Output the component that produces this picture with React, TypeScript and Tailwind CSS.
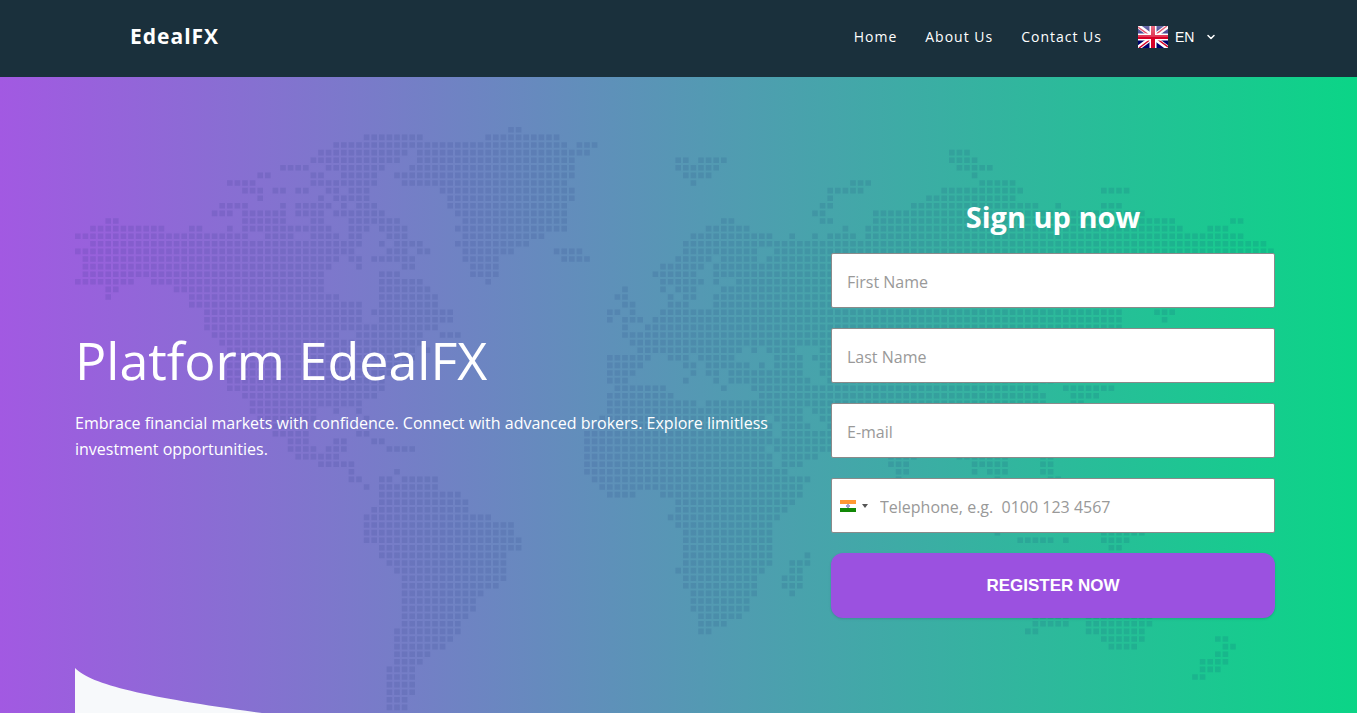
import { ChevronDown } from "lucide-react";

const CELL = 7.6;
const DOT = 5.6;

// One entry per map row, each "from-to" is a run of filled columns.
const MAP_ROWS = [
  "57-58",
  "38-45 54-63",
  "34-64 66-68",
  "32-43 45-67 115-117",
  "31-42 45-65 79-80 82-85 115-118",
  "27-30 33-40 44-65 79-84 116-120",
  "24-25 31-32 35-39 42-65 80-83 118-118",
  "20-23 31-39 43-64 81-81 102-104 119-123",
  "22-24 26-27 29-30 33-34 36-38 48-65 99-103 114-124 135-138",
  "24-24 32-32 34-38 49-65 99-99 112-123",
  "19-22 27-27 29-33 35-35 37-39 49-64 98-99 110-126 129-129 135-137",
  "18-20 22-27 29-32 34-40 50-64 97-98 105-140",
  "4-5 22-27 31-32 36-42 51-64 85-86 98-99 105-144 152-153",
  "2-11 15-16 20-20 22-33 36-38 40-43 50-64 83-88 101-101 104-145 149-151",
  "0-22 25-28 31-34 36-37 41-43 51-61 81-91 94-94 97-97 99-102 104-153",
  "2-37 40-40 42-45 50-59 80-156",
  "0-36 41-43 45-46 51-57 63-66 80-89 92-157",
  "1-34 36-37 39-44 51-55 64-67 79-83 85-89 91-150",
  "1-33 37-37 43-44 52-55 77-82 84-150",
  "1-32 40-42 52-55 76-81 84-148",
  "0-7 10-32 40-45 54-54 77-82 84-84 87-146",
  "4-5 13-32 40-46 72-72 77-77 79-81 85-145",
  "4-4 15-34 40-47 71-72 78-78 80-81 84-140",
  "15-37 40-47 72-73 78-80 84-138",
  "17-37 39-49 70-71 73-73 77-137 142-144",
  "17-37 40-49 70-70 72-74 76-137 143-143",
  "17-47 72-72 75-137",
  "18-34 37-45 48-50 72-136",
  "19-45 73-135",
  "20-44 46-46 74-87 89-89 91-94 98-134",
  "20-44 70-75 78-80 82-86 92-95 97-133",
  "20-43 70-74 80-81 83-88 90-90 92-95 98-132",
  "20-42 70-73 81-81 83-84 86-95 98-130",
  "20-40 70-72 80-80 84-84 86-96 99-128",
  "20-40 71-77 85-85 89-126 130-136",
  "22-39 70-78 90-127 131-134",
  "23-37 70-81 83-127 131-132",
  "23-31 34-34 37-37 70-95 97-127",
  "24-31 38-38 69-90 92-95 98-126",
  "25-30 68-91 93-96 99-125",
  "26-30 37-38 67-91 93-99 101-124",
  "28-30 34-35 39-40 67-91 92-99 104-122",
  "28-31 33-35 41-44 67-90 92-99 106-122",
  "29-34 67-91 93-97 107-110 116-122 127-128",
  "32-36 67-91 93-95 107-109 118-122 127-128",
  "36-36 42-42 67-93 108-109 118-118 120-122 127-128",
  "36-37 40-41 43-47 68-96 108-108 121-121 128-129",
  "38-38 40-47 69-95",
  "40-50 70-73 77-95",
  "40-51 79-94",
  "39-51 79-93",
  "38-54 78-92",
  "38-57 79-91",
  "38-57 80-91 121-121 135-140",
  "38-58 80-91 124-128 130-130 135-138",
  "40-58 80-91 136-137",
  "40-56 80-91 96-96",
  "41-56 80-91 94-96",
  "42-56 79-90 94-95",
  "43-56 80-89 93-95",
  "43-55 80-89 93-95",
  "43-53 81-89 94-94",
  "43-52 81-88",
  "43-52 81-88",
  "43-51 82-87 126-130 133-141",
  "43-50 82-85 126-130 133-141",
  "42-50 82-83 125-126 133-140",
  "42-49 135-140 150-151",
  "42-48 136-139 151-152",
  "42-46 150-151",
  "42-45 148-151",
  "41-44 148-150",
  "41-44 147-148",
  "41-44",
  "41-44",
  "41-43",
  "41-43",
];

const mapPath = MAP_ROWS.map((row, r) =>
  row
    .split(" ")
    .map((run) => {
      const [from, to] = run.split("-").map(Number);
      let d = "";
      for (let c = from; c <= to; c++) {
        d += `M${(c * CELL).toFixed(1)} ${(r * CELL).toFixed(1)}h${DOT}v${DOT}h-${DOT}z`;
      }
      return d;
    })
    .join("")
).join("");

function DottedMap() {
  return (
    <svg viewBox="0 0 1200 590" className="absolute inset-x-0 top-[50px] w-full" aria-hidden="true">
      <path d={mapPath} fill="#08206e" fillOpacity="0.1" />
    </svg>
  );
}

function FlagUK() {
  return (
    <svg viewBox="0 0 30 22" className="h-[22px] w-[30px]" aria-hidden="true">
      <defs>
        <linearGradient id="gloss" x1="0" y1="0" x2="0" y2="1">
          <stop offset="0" stopColor="#fff" stopOpacity="0.42" />
          <stop offset="0.5" stopColor="#fff" stopOpacity="0.2" />
          <stop offset="0.5" stopColor="#fff" stopOpacity="0" />
        </linearGradient>
      </defs>
      <rect width="30" height="22" fill="#00006b" />
      <path d="M0 0L30 22M30 0L0 22" stroke="#fff" strokeWidth="4.6" />
      <path d="M0 1L13 10.500M30 21L17 11.500M29 0L17 9M1 22L13 13" stroke="#d80027" strokeWidth="1.500" />
      <path d="M15 0v22M0 11h30" stroke="#fff" strokeWidth="7" />
      <path d="M15 0v22M0 11h30" stroke="#d80027" strokeWidth="4" />
      <rect width="30" height="22" fill="url(#gloss)" />
    </svg>
  );
}

function FlagIndia() {
  return (
    <svg viewBox="0 0 16 12" className="h-3 w-4" aria-hidden="true">
      <rect width="16" height="12" fill="#fff" />
      <rect width="16" height="4" fill="#ff9933" />
      <rect y="8" width="16" height="4" fill="#128807" />
      <path d="M7 4h2v1h1v2h-1v1h-2v-1h-1v-2h1z" fill="#a3a3d1" />
    </svg>
  );
}

const links = ["Home", "About Us", "Contact Us"];

function Header() {
  return (
    <header className="bg-[#1a303c] pr-[7px] text-white">
      <div className="mx-auto flex h-[77px] max-w-[1090px] items-center pb-[3px]">
        <a href="#" className="text-[21px] font-bold tracking-[1px]">
          EdealFX
        </a>
        <nav className="ml-auto flex gap-7 text-sm tracking-[1px]">
          {links.map((link) => (
            <a key={link} href="#">
              {link}
            </a>
          ))}
        </nav>
        <label className="ml-9 flex items-center gap-[7px] pr-[3px]">
          <FlagUK />
          <select
            aria-label="Language"
            className="w-[23px] appearance-none bg-transparent font-['Liberation_Sans',sans-serif] text-sm outline-none"
          >
            <option>EN</option>
          </select>
          <ChevronDown size={12} strokeWidth={3} />
        </label>
      </div>
    </header>
  );
}

const inputClass =
  "h-[55px] w-full rounded-[2px] border border-[#8a8a8a] bg-white px-[15px] pt-[2px] text-base text-gray-700 placeholder:text-[#999] outline-none";

function SignUpForm() {
  return (
    <form className="flex w-[37%] shrink-0 flex-col gap-5" onSubmit={(e) => e.preventDefault()}>
      <h2 className="-mb-1 text-center text-[29px] leading-10 font-bold text-white">Sign up now</h2>
      <input type="text" aria-label="First Name" placeholder="First Name" className={inputClass} />
      <input type="text" aria-label="Last Name" placeholder="Last Name" className={inputClass} />
      <input type="email" aria-label="E-mail" placeholder="E-mail" className={inputClass} />
      <div className="flex h-[55px] items-center rounded-[2px] border border-[#8a8a8a] bg-white">
        <button type="button" aria-label="Country code" className="flex h-full w-12 items-center gap-[6px] pl-2">
          <FlagIndia />
          <svg viewBox="0 0 6 4" className="h-1 w-[6px]" aria-hidden="true">
            <path d="M0 0h6l-3 4z" fill="#555" />
          </svg>
        </button>
        <input
          type="tel"
          aria-label="Telephone"
          placeholder="Telephone, e.g.  0100 123 4567"
          className="h-full min-w-0 flex-1 bg-transparent pt-[2px] text-base text-gray-700 placeholder:text-[#999] outline-none"
        />
      </div>
      <button
        type="submit"
        className="h-[65px] rounded-xl bg-[#9b51e0] font-['Liberation_Sans',sans-serif] text-[17px] font-bold text-white shadow-sm"
      >
        REGISTER NOW
      </button>
    </form>
  );
}

export default function App() {
  return (
    <div className="flex min-h-screen flex-col font-['Open_Sans','Noto_Sans',sans-serif]">
      <Header />
      <main className="flex flex-1 overflow-hidden bg-linear-to-r/srgb from-[#a259e2] to-[#0bd587] pr-[7px]">
        <div className="relative mx-auto w-full max-w-[1200px] pt-[120px] pb-[95px]">
          <DottedMap />
          <div className="relative flex items-center">
            <section className="flex-1 pr-12 pb-6 text-white">
              <h1 className="text-[52px] leading-[60px]">Platform EdealFX</h1>
              <p className="mt-5 text-base leading-[26px]">
                Embrace financial markets with confidence. Connect with advanced brokers. Explore limitless investment
                opportunities.
              </p>
            </section>
            <SignUpForm />
          </div>
          <svg viewBox="0 0 187 45" className="absolute bottom-0 left-0 h-[45px] w-[187px]" aria-hidden="true">
            <path d="M0 0C16 17 75 30 187 45H0z" fill="#f7f9fb" />
          </svg>
        </div>
      </main>
    </div>
  );
}
